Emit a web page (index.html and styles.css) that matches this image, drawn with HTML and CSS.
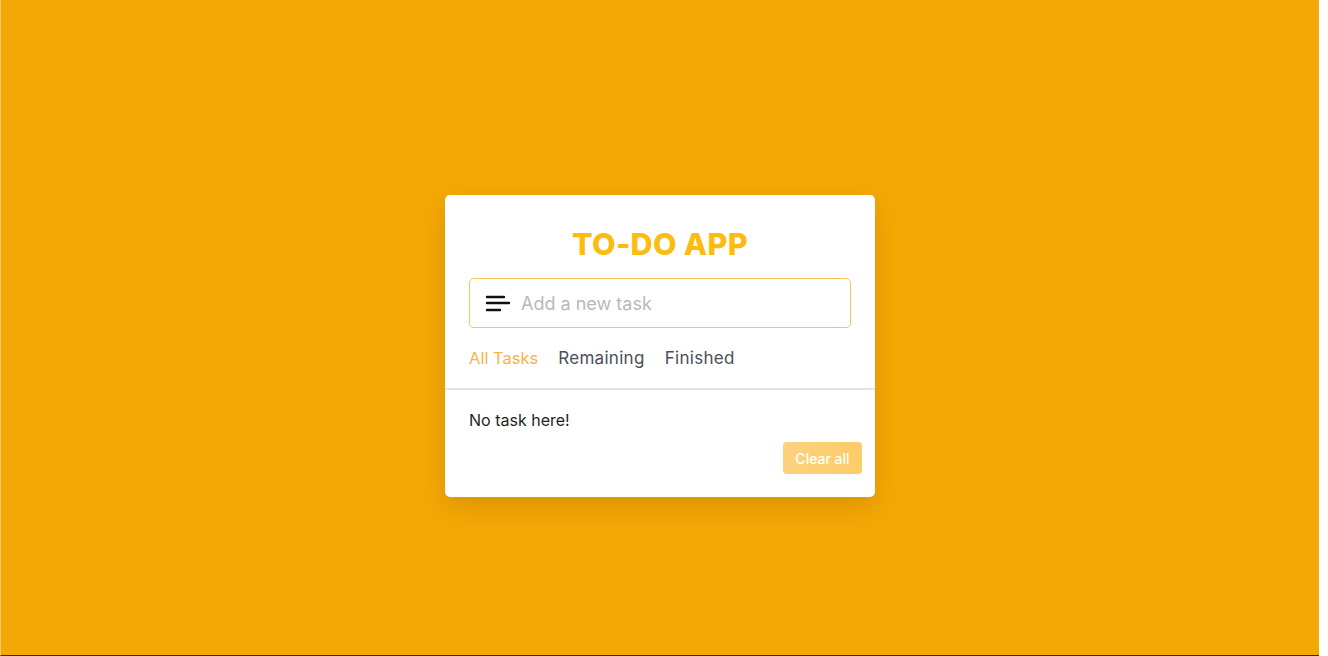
FILE: index.html
```html
<!DOCTYPE html>
<html lang="en">
<head>
<meta charset="utf-8">
<title>To-Do App</title>
<link rel="stylesheet" href="styles.css">
</head>
<body>
<div class="screen">
  <div class="card">
    <h1 class="title">TO-DO APP</h1>
    <div class="task-input">
      <svg class="menu-icon" width="26" height="20" viewBox="0 0 26 20">
        <line x1="2" y1="3" x2="19" y2="3" />
        <line x1="2" y1="9" x2="24" y2="9" />
        <line x1="2" y1="16" x2="15" y2="16" />
      </svg>
      <input type="text" placeholder="Add a new task">
    </div>
    <div class="controls">
      <div class="filters">
        <span class="filter active">All Tasks</span>
        <span class="filter">Remaining</span>
        <span class="filter">Finished</span>
      </div>
    </div>
    <div class="task-box">
      <p class="empty">No task here!</p>
      <div class="actions">
        <button class="clear-btn" disabled>Clear all</button>
      </div>
    </div>
  </div>
</div>
<div class="edge"></div>
</body>
</html>
```
FILE: styles.css
```css
* { box-sizing: border-box; }
html, body { margin: 0; padding: 0; height: 100%; }
body {
  display: flex;
  background: #ffffff;
  font-family: Inter, "Noto Sans", sans-serif;
  overflow: hidden;
}
.screen {
  flex: 1;
  height: 656px;
  background: #f4a805;
  border-left: 1px solid #f7c96e;
  border-bottom: 1px solid #3b2d0a;
  display: flex;
  justify-content: center;
  align-items: flex-start;
  padding-top: 195px;
}
.edge { width: 9px; background: #ffffff; }
.card {
  width: 430px;
  background: #ffffff;
  border-radius: 5px;
  box-shadow: 0 10px 25px rgba(150, 90, 0, 0.25);
  padding-top: 30px;
}
.title {
  margin: 0;
  text-align: center;
  color: #fcbc0f;
  font-size: 30.5px;
  font-weight: 800;
  line-height: 38px;
  letter-spacing: 0.3px;
}
.task-input {
  margin: 15px 24px 0 24px;
  height: 50px;
  border: 1px solid #f8c45a;
  border-radius: 5px;
  display: flex;
  align-items: center;
  padding-left: 15px;
}
.menu-icon { flex: none; margin-top: 2px; }
.menu-icon line {
  stroke: #111;
  stroke-width: 2.4;
  stroke-linecap: round;
}
.task-input input {
  border: none;
  outline: none;
  flex: 1;
  margin-left: 10px;
  font-family: inherit;
  font-size: 18px;
  color: #333;
  background: transparent;
  padding: 0;
}
.task-input input::placeholder { color: #b8b8bd; }
.controls {
  padding: 17px 24px 17px 24px;
  border-bottom: 2px solid #e4e4e6;
}
.filters { display: flex; gap: 20px; }
.filter {
  font-size: 17px;
  color: #4a4e5a;
  line-height: 26px;
  letter-spacing: 0.3px;
}
.filter.active { color: #f9b14a; letter-spacing: 0; font-size: 16.5px; }
.task-box { padding: 18px 13px 23px 24px; }
.empty {
  margin: 0;
  font-size: 16px;
  color: #1f1f24;
  line-height: 24px;
}
.actions { display: flex; justify-content: flex-end; margin-top: 10px; }
.clear-btn {
  width: 79px;
  height: 32px;
  border: none;
  border-radius: 4px;
  background: linear-gradient(90deg, #fcd27f, #fdcb68);
  color: #ffffff;
  font-family: inherit;
  font-size: 14px;
  font-weight: 500;
  padding: 0;
}
```
